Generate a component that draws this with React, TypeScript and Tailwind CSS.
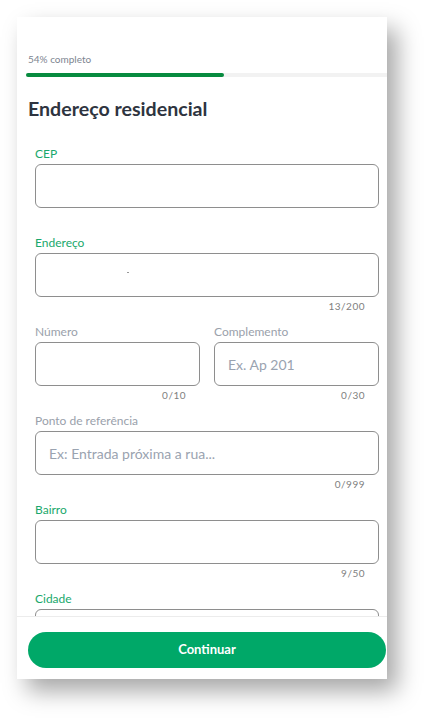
import React from "react"

const Field = ({
  label,
  active,
  placeholder,
  counter,
  value,
}: {
  label: string
  active?: boolean
  placeholder?: string
  counter?: string
  value?: React.ReactNode
}) => {
  return (
    <div className="flex flex-col">
      <span
        className={`text-[12px] leading-[16px] ${active ? "text-[#19a86c]" : "text-[#9aa1ab]"}`}
      >
        {label}
      </span>
      <div className="mt-[2px] h-[44px] rounded-[6px] border border-[#8e8e8e] flex items-center px-[13px] text-[14px] text-[#9aa3b0]">
        {value ?? placeholder}
      </div>
      <div className="mt-[3px] h-[12px] pr-[14px] text-right text-[10px] leading-[12px] text-[#808080] tracking-[0.5px]">
        {counter}
      </div>
    </div>
  )
}

export default function App() {
  return (
    <div className="min-h-[727px] bg-white pl-[17px] pt-[17px]" style={{ fontFamily: "Lato, 'Open Sans', sans-serif" }}>
      <div className="w-[370px] h-[662px] bg-white flex flex-col overflow-hidden shadow-[10px_12px_22px_rgba(0,0,0,0.35)]">
        <div className="flex-1 overflow-hidden">
          <div className="pt-[36px] pl-[11px] text-[10px] leading-[12px] text-[#7d8590]">54% completo</div>
          <div className="mt-[8px] ml-[9px] h-[4px] bg-[#f2f2f2] rounded-l-full">
            <div className="h-[4px] w-[198px] bg-[#078b3f] rounded-full" />
          </div>
          <h1 className="mt-[20px] ml-[11px] text-[19.6px] leading-[24px] font-bold text-[#2e3440]">
            Endereço residencial
          </h1>
          <div className="mt-[25px] pl-[18px] pr-[8px] flex flex-col gap-[12px]">
            <Field label="CEP" active />
            <Field
              label="Endereço"
              active
              counter="13/200"
              value={<span className="ml-[78px] -mt-[6px] block w-[2px] h-[1px] bg-[#999]" />}
            />
            <div className="grid grid-cols-2 gap-[14px]">
              <Field label="Número" counter="0/10" />
              <Field label="Complemento" placeholder="Ex. Ap 201" counter="0/30" />
            </div>
            <Field label="Ponto de referência" placeholder="Ex: Entrada próxima a rua..." counter="0/999" />
            <Field label="Bairro" active counter="9/50" />
            <Field label="Cidade" active />
          </div>
        </div>
        <div className="h-[63px] shrink-0 border-t border-[#ececec] bg-white pt-[15px] pl-[11px] pr-[1px]">
          <button className="w-full h-[36px] rounded-full bg-[#00a868] text-white text-[13px] font-bold">
            Continuar
          </button>
        </div>
      </div>
    </div>
  )
}
